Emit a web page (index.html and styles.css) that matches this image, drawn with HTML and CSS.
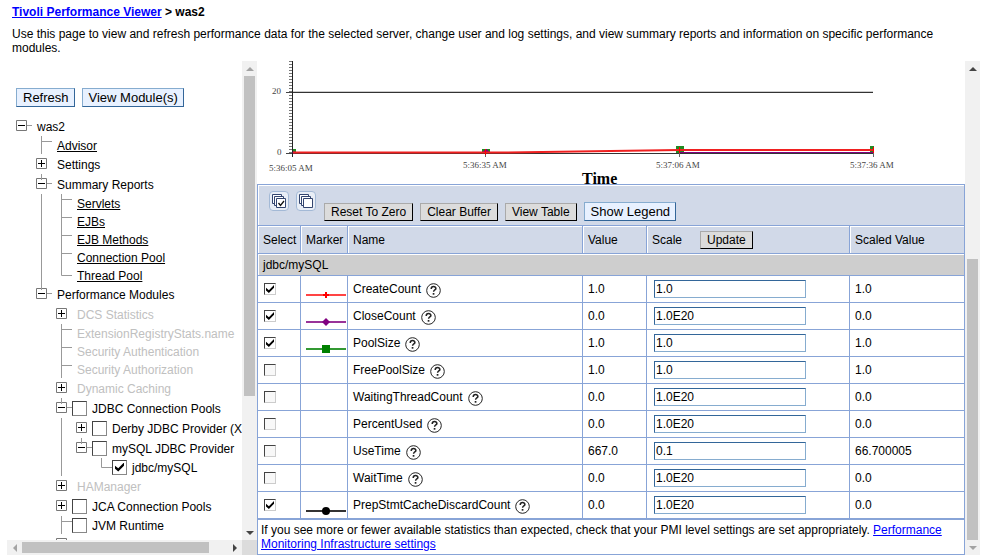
FILE: index.html
```html
<!DOCTYPE html>
<html lang="en">
<head>
    <meta charset="UTF-8">
    <meta name="viewport" content="width=device-width, initial-scale=1.0">
    <title>Tivoli Performance Viewer</title>
    <link rel="stylesheet" href="styles.css">
</head>
<body>
    <svg class="defs" aria-hidden="true">
        <symbol id="plus" viewBox="0 0 16 20">
            <path d="M0.5 4.5h10v10h-10z" fill="#fff" stroke="#777"/>
            <path d="M2 9.5h7M5.5 6v7" stroke="#000" fill="none"/>
        </symbol>
        <symbol id="minus" viewBox="0 0 16 20">
            <path d="M0.5 4.5h10v10h-10z" fill="#fff" stroke="#777"/>
            <path d="M11 9.5h5" stroke="#999"/>
            <path d="M2 9.5h7" stroke="#000"/>
        </symbol>
        <symbol id="branch" viewBox="0 0 16 20">
            <use href="#minus" width="16" height="20"/>
            <path d="M5.5 0v6" stroke="#999"/>
        </symbol>
        <symbol id="tee" viewBox="0 0 16 18">
            <path d="M5.5 0v18M6 5.5h10" stroke="#999" fill="none"/>
        </symbol>
        <symbol id="elbow" viewBox="0 0 16 18">
            <path d="M5.5 0v9.5h10.500" stroke="#999" fill="none"/>
        </symbol>
        <symbol id="help" viewBox="0 0 15 15">
            <circle cx="7.500" cy="7.500" r="6.800" fill="#fff" stroke="#222"/>
            <path d="M5.200 5.900c0-3.200 4.900-3 4.700-.3-.1 1.300-2.300 1.500-2.300 3.100" fill="none" stroke="#222" stroke-width="1.500"/>
            <path d="M6.700 10h1.700v1.700h-1.700z" fill="#222"/>
        </symbol>
        <symbol id="stack" viewBox="0 0 20 20">
            <rect x="0.500" y="0.500" width="19" height="19" rx="3.500" fill="#e9eef6" stroke="#a3b9d6"/>
            <path d="M3.500 3.500h9v9h-9z" fill="#fff" stroke="#33456f"/>
            <path d="M5.500 5.500h9v9h-9z" fill="#fff" stroke="#33456f"/>
            <path d="M7.500 7.500h9v9h-9z" fill="#fff" stroke="#33456f"/>
        </symbol>
    </svg>

    <header>
        <h1><a href="#">Tivoli Performance Viewer</a> &gt; was2</h1>
        <p>Use this page to view and refresh performance data for the selected server, change user and log settings, and view summary reports and information on specific performance modules.</p>
    </header>

    <main>
        <section class="modules">
            <div class="modules-view">
                <div class="actions">
                    <button class="btn">Refresh</button>
                    <button class="btn">View Module(s)</button>
                </div>
                <ul class="tree">
                    <li>
                        <div class="node"><svg><use href="#minus"/></svg><span>was2</span></div>
                        <ul>
                            <li><div class="node leaf"><svg><use href="#tee"/></svg><a href="#">Advisor</a></div></li>
                            <li><div class="node"><svg><use href="#plus"/></svg><span>Settings</span></div></li>
                            <li>
                                <div class="node"><svg><use href="#branch"/></svg><span>Summary Reports</span></div>
                                <ul class="lined">
                                    <li><div class="node leaf"><svg><use href="#tee"/></svg><a href="#">Servlets</a></div></li>
                                    <li><div class="node leaf"><svg><use href="#tee"/></svg><a href="#">EJBs</a></div></li>
                                    <li><div class="node leaf"><svg><use href="#tee"/></svg><a href="#">EJB Methods</a></div></li>
                                    <li><div class="node leaf"><svg><use href="#tee"/></svg><a href="#">Connection Pool</a></div></li>
                                    <li><div class="node leaf"><svg><use href="#elbow"/></svg><a href="#">Thread Pool</a></div></li>
                                </ul>
                            </li>
                            <li>
                                <div class="node"><svg><use href="#branch"/></svg><span>Performance Modules</span></div>
                                <ul>
                                    <li><div class="node off"><svg><use href="#plus"/></svg><span>DCS Statistics</span></div></li>
                                    <li><div class="node leaf off"><svg><use href="#tee"/></svg><span>ExtensionRegistryStats.name</span></div></li>
                                    <li><div class="node leaf off"><svg><use href="#tee"/></svg><span>Security Authentication</span></div></li>
                                    <li><div class="node leaf off"><svg><use href="#tee"/></svg><span>Security Authorization</span></div></li>
                                    <li><div class="node off"><svg><use href="#plus"/></svg><span>Dynamic Caching</span></div></li>
                                    <li>
                                        <div class="node"><svg><use href="#branch"/></svg><input type="checkbox" id="m-jdbc"><label for="m-jdbc">JDBC Connection Pools</label></div>
                                        <ul class="lined">
                                            <li><div class="node"><svg><use href="#plus"/></svg><input type="checkbox" id="m-derby"><label for="m-derby">Derby JDBC Provider (X</label></div></li>
                                            <li>
                                                <div class="node"><svg><use href="#branch"/></svg><input type="checkbox" id="m-mysql"><label for="m-mysql">mySQL JDBC Provider</label></div>
                                                <ul>
                                                    <li><div class="node leaf"><svg><use href="#elbow"/></svg><input type="checkbox" id="m-ds" checked><label for="m-ds">jdbc/mySQL</label></div></li>
                                                </ul>
                                            </li>
                                        </ul>
                                    </li>
                                    <li><div class="node off"><svg><use href="#plus"/></svg><span>HAManager</span></div></li>
                                    <li><div class="node"><svg><use href="#plus"/></svg><input type="checkbox" id="m-jca"><label for="m-jca">JCA Connection Pools</label></div></li>
                                    <li><div class="node leaf"><svg><use href="#tee"/></svg><input type="checkbox" id="m-jvm"><label for="m-jvm">JVM Runtime</label></div></li>
                                    <li><div class="node"><svg><use href="#plus"/></svg></div></li>
                                </ul>
                            </li>
                        </ul>
                    </li>
                </ul>
            </div>
            <div class="scroll">
                <i class="arrow up dim"></i>
                <div class="track"><div class="thumb tree-thumb"></div><div class="rest tree-rest"></div></div>
                <i class="arrow down"></i>
            </div>
            <div class="scroll across">
                <i class="arrow left dim"></i>
                <div class="track"><div class="thumb wide-thumb"></div><div class="rest wide-rest"></div></div>
                <i class="arrow right"></i>
            </div>
            <div class="corner"></div>
        </section>

        <section class="data">
            <div class="data-view">
                <svg class="chart" viewBox="0 0 708 123">
                    <path d="M35.500 0v96" stroke="#222"/>
                    <!-- minor ticks, one per unit -->
                    <path d="M33.500 0v31M33.500 34v58" stroke="#777" stroke-width="3" stroke-dasharray="1 2" shape-rendering="crispEdges"/>
                    <path d="M29 31.500h6M29 92.500h6" stroke="#444"/>
                    <path d="M36 30.500h580" stroke="#ccc"/>
                    <path d="M36 31.500h580" stroke="#333"/>
                    <path d="M36 92.500h580" stroke="#333"/>
                    <path d="M228.500 92v4M422.500 92v4M616.500 92v4" stroke="#666"/>
                    <path d="M36 88h3v4h-3zM225 88h8v4h-8zM419 85h8v7h-8zM613 85h4v7h-4z" fill="#228b22"/>
                    <path d="M36 91h2v1h-2zM226 91l3-3 3 3zM422 91.500h194" fill="#800080" stroke="#800080"/>
                    <path d="M36 91.500h210L422 89h194" fill="none" stroke="#f02020" stroke-width="2"/>
                    <path d="M228.500 88v6M422.500 86v6M616.500 86v6" stroke="#f00" stroke-width="1"/>
                    <g class="ticks">
                        <text x="15" y="33">20</text>
                        <text x="20" y="94">0</text>
                        <text x="12" y="110">5:36:05 AM</text>
                        <text x="206" y="107">5:36:35 AM</text>
                        <text x="399" y="107">5:37:06 AM</text>
                        <text x="593" y="107">5:37:36 AM</text>
                    </g>
                    <text class="axis" x="325" y="123">Time</text>
                </svg>

                <table>
                    <colgroup>
                        <col class="c-select"><col class="c-marker"><col><col class="c-value"><col class="c-scale"><col class="c-scaled">
                    </colgroup>
                    <thead>
                        <tr class="toolbar">
                            <td colspan="6">
                                <div class="tools">
                                    <button class="icon-btn" aria-label="Select all"><svg viewBox="0 0 20 20"><use href="#stack"/><path d="M9.500 12l2 2.500 3.500-4.500" fill="none" stroke="#111" stroke-width="1.300"/></svg></button>
                                    <button class="icon-btn" aria-label="Deselect all"><svg viewBox="0 0 20 20"><use href="#stack"/></svg></button>
                                    <button class="btn grey">Reset To Zero</button>
                                    <button class="btn grey">Clear Buffer</button>
                                    <button class="btn grey">View Table</button>
                                    <button class="btn">Show Legend</button>
                                </div>
                            </td>
                        </tr>
                        <tr class="heads">
                            <th>Select</th>
                            <th>Marker</th>
                            <th>Name</th>
                            <th>Value</th>
                            <th><div class="scale-head">Scale <button class="btn grey">Update</button></div></th>
                            <th>Scaled Value</th>
                        </tr>
                    </thead>
                    <tbody>
                        <tr class="group"><td colspan="6">jdbc/mySQL</td></tr>
                        <tr>
                            <td><input type="checkbox" aria-label="CreateCount" checked></td>
                            <td class="marker"><svg viewBox="0 0 40 14"><path d="M0 7h40" stroke="#f44" stroke-width="2"/><path d="M17 7h6M20 4v6" stroke="#f00" stroke-width="2"/></svg></td>
                            <td><span class="stat">CreateCount <svg><use href="#help"/></svg></span></td>
                            <td>1.0</td>
                            <td><input type="text" aria-label="CreateCount scale" value="1.0"></td>
                            <td>1.0</td>
                        </tr>
                        <tr>
                            <td><input type="checkbox" aria-label="CloseCount" checked></td>
                            <td class="marker"><svg viewBox="0 0 40 14"><path d="M0 7h40" stroke="#993399" stroke-width="2"/><path d="M16 7l4-4 4 4-4 4z" fill="#800080"/></svg></td>
                            <td><span class="stat">CloseCount <svg><use href="#help"/></svg></span></td>
                            <td>0.0</td>
                            <td><input type="text" aria-label="CloseCount scale" value="1.0E20"></td>
                            <td>0.0</td>
                        </tr>
                        <tr>
                            <td><input type="checkbox" aria-label="PoolSize" checked></td>
                            <td class="marker"><svg viewBox="0 0 40 14"><path d="M0 7h40" stroke="#339933" stroke-width="2"/><path d="M16 3h8v8h-8z" fill="#008000"/></svg></td>
                            <td><span class="stat">PoolSize <svg><use href="#help"/></svg></span></td>
                            <td>1.0</td>
                            <td><input type="text" aria-label="PoolSize scale" value="1.0"></td>
                            <td>1.0</td>
                        </tr>
                        <tr>
                            <td><input type="checkbox" aria-label="FreePoolSize"></td>
                            <td></td>
                            <td><span class="stat">FreePoolSize <svg><use href="#help"/></svg></span></td>
                            <td>1.0</td>
                            <td><input type="text" aria-label="FreePoolSize scale" value="1.0"></td>
                            <td>1.0</td>
                        </tr>
                        <tr>
                            <td><input type="checkbox" aria-label="WaitingThreadCount"></td>
                            <td></td>
                            <td><span class="stat">WaitingThreadCount <svg><use href="#help"/></svg></span></td>
                            <td>0.0</td>
                            <td><input type="text" aria-label="WaitingThreadCount scale" value="1.0E20"></td>
                            <td>0.0</td>
                        </tr>
                        <tr>
                            <td><input type="checkbox" aria-label="PercentUsed"></td>
                            <td></td>
                            <td><span class="stat">PercentUsed <svg><use href="#help"/></svg></span></td>
                            <td>0.0</td>
                            <td><input type="text" aria-label="PercentUsed scale" value="1.0E20"></td>
                            <td>0.0</td>
                        </tr>
                        <tr>
                            <td><input type="checkbox" aria-label="UseTime"></td>
                            <td></td>
                            <td><span class="stat">UseTime <svg><use href="#help"/></svg></span></td>
                            <td>667.0</td>
                            <td><input type="text" aria-label="UseTime scale" value="0.1"></td>
                            <td>66.700005</td>
                        </tr>
                        <tr>
                            <td><input type="checkbox" aria-label="WaitTime"></td>
                            <td></td>
                            <td><span class="stat">WaitTime <svg><use href="#help"/></svg></span></td>
                            <td>0.0</td>
                            <td><input type="text" aria-label="WaitTime scale" value="1.0E20"></td>
                            <td>0.0</td>
                        </tr>
                        <tr>
                            <td><input type="checkbox" aria-label="PrepStmtCacheDiscardCount" checked></td>
                            <td class="marker"><svg viewBox="0 0 40 14"><path d="M0 7h40" stroke="#333" stroke-width="2"/><circle cx="20" cy="7" r="4"/></svg></td>
                            <td><span class="stat">PrepStmtCacheDiscardCount <svg><use href="#help"/></svg></span></td>
                            <td>0.0</td>
                            <td><input type="text" aria-label="PrepStmtCacheDiscardCount scale" value="1.0E20"></td>
                            <td>0.0</td>
                        </tr>
                    </tbody>
                </table>
                <p class="note">If you see more or fewer available statistics than expected, check that your PMI level settings are set appropriately. <a href="#">Performance Monitoring Infrastructure settings</a></p>
            </div>
            <div class="scroll">
                <i class="arrow up"></i>
                <div class="track"><div class="rest data-rest"></div><div class="thumb data-thumb"></div></div>
                <i class="arrow down dim"></i>
            </div>
        </section>
    </main>
</body>
</html>
```

FILE: styles.css
```css
* { box-sizing: border-box; }
body {
    font: 12px/14px "Liberation Sans", Arial, sans-serif;
    color: #000;
    margin: 0;
    height: 100vh;
    display: flex;
    flex-direction: column;
    overflow: hidden;
}
a { color: #00f; }
.defs { position: absolute; width: 0; height: 0; }

header { padding: 5px 12px 6px; }
header h1 { font-size: 12px; line-height: 14px; margin: 0 0 8px; }
header p { margin: 0; }

main { flex: 1; min-height: 0; display: flex; margin: 0 3px 4px 7px; }

/* buttons and fields */
.btn {
    font: 13px/15px "Liberation Sans", Arial, sans-serif;
    color: #000;
    background: #e8f1ff;
    border: 1px solid;
    border-color: #86accf #336699 #336699 #86accf;
    padding: 1px 5px 1px 6px;
    white-space: nowrap;
}
.btn.grey {
    font-size: 12px;
    line-height: 14px;
    padding: 1px 6px;
    background: #dcdcdc;
    border-color: #aaa #000 #000 #aaa;
}
input[type="text"] {
    font: 12px/14px "Liberation Sans", Arial, sans-serif;
    width: 152px;
    height: 18px;
    margin: 0 0 0 2px;
    padding: 0 1px;
    display: block;
    border: 1px solid;
    border-color: #336699 #86accf #86accf #336699;
    border-radius: 0;
}
input[type="checkbox"] {
    appearance: none;
    width: 12px;
    height: 12px;
    margin: 0 1px;
    display: block;
    flex: none;
    background: #f8f8f8;
    border: 1px solid;
    border-color: #444 #ccc #ccc #444;
}
input[type="checkbox"]:checked { background: #fff; }
input[type="checkbox"]:checked::before {
    content: "";
    display: block;
    width: 8px;
    height: 8px;
    margin: 1px;
    background: #000;
    clip-path: polygon(0 35%, 36% 65%, 100% 0, 100% 35%, 36% 100%, 0 70%);
}

/* module tree */
.modules {
    flex: none;
    width: 250px;
    display: grid;
    grid-template-columns: 1fr 15px;
    grid-template-rows: 1fr 15px;
}
.modules-view { overflow: hidden; min-width: 0; min-height: 0; padding: 27px 0 0 9px; }
.actions { display: flex; gap: 7px; margin-bottom: 9px; }
.tree, .tree ul { list-style: none; margin: 0; padding: 0; }
.tree ul { padding-left: 20px; }
.tree ul.lined { background: linear-gradient(#999, #999) 5px 0 / 1px 100% no-repeat; }
.node { display: flex; align-items: center; height: 20px; white-space: nowrap; }
.node svg { width: 16px; height: 20px; flex: none; }
.node.leaf, .node.leaf svg { height: 18px; }
.node a, .node span, .node label { color: #000; margin: 2px 0 0 5px; }
.node.off span { color: #c0c0c0; }
.node input[type="checkbox"] {
    width: 15px;
    height: 15px;
    margin: 0;
    background: #fff;
    border-color: #444 #888 #888 #444;
}
.node input[type="checkbox"]:checked::before { width: 9px; height: 9px; margin: 2px; }

/* scrollbars */
.scroll { width: 15px; background: #f1f1f1; display: flex; flex-direction: column; }
.track { flex: 1; display: flex; flex-direction: column; padding: 0 2px; }
.thumb { background: #c1c1c1; }
.across { width: auto; flex-direction: row; }
.across .track { flex-direction: row; padding: 2px 0; }
.corner { background: #dcdcdc; }
.arrow { width: 15px; height: 15px; flex: none; display: flex; align-items: center; justify-content: center; }
.arrow::before { content: ""; border: 4px solid transparent; }
.up::before { border-bottom-color: #444; border-top: 0; }
.down::before { border-top-color: #444; border-bottom: 0; }
.left::before { border-right-color: #444; border-left: 0; }
.right::before { border-left-color: #444; border-right: 0; }
.up.dim::before { border-bottom-color: #a3a3a3; }
.down.dim::before { border-top-color: #a3a3a3; }
.left.dim::before { border-right-color: #a3a3a3; }
.tree-thumb { flex: 320; }
.tree-rest { flex: 129; }
.wide-thumb { flex: 187; }
.wide-rest { flex: 18; }
.data-rest { flex: 183; }
.data-thumb { flex: 281; }

/* chart and counters */
.data { flex: 1; min-width: 0; display: flex; }
.data-view { flex: 1; min-width: 0; overflow: hidden; }
.chart { display: block; width: 708px; height: 123px; overflow: visible; }
.chart text { font-family: "Liberation Serif", "Times New Roman", serif; }
.ticks text { font-size: 9px; fill: #444; }
.chart .axis { font-size: 16px; font-weight: bold; }

table { width: 100%; table-layout: fixed; border-collapse: collapse; }
td, th {
    border: 1px solid #88a4d7;
    height: 27px;
    padding: 0 0 0 5px;
    text-align: left;
    font-weight: normal;
    white-space: nowrap;
}
.c-select { width: 43px; }
.c-marker { width: 47px; }
.c-value { width: 64px; }
.c-scale { width: 203px; }
.c-scaled { width: 115px; }
.toolbar td, .heads th { background: #d1d9e8; box-shadow: inset 1px 1px #fff; }
.toolbar td { height: 41px; vertical-align: bottom; padding: 0 0 4px 11px; }
.heads th { height: 28px; }
.group td { height: 22px; background: #cecece; box-shadow: inset 1px 1px #fff; }
.tools { display: flex; align-items: flex-end; gap: 7px; }
.icon-btn { width: 20px; height: 20px; padding: 0; border: 0; background: none; margin-bottom: 10px; }
.icon-btn svg { display: block; width: 20px; height: 20px; }
.icon-btn + .btn { margin-left: 1px; }
.scale-head { display: flex; align-items: center; gap: 18px; }
.marker { vertical-align: bottom; }
.marker svg { display: block; width: 40px; height: 14px; }
.stat { display: flex; align-items: center; gap: 5px; }
.stat svg { width: 15px; height: 15px; margin-top: 2px; }
.note { margin: 0; border: 1px solid #88a4d7; padding: 3px; }
```
